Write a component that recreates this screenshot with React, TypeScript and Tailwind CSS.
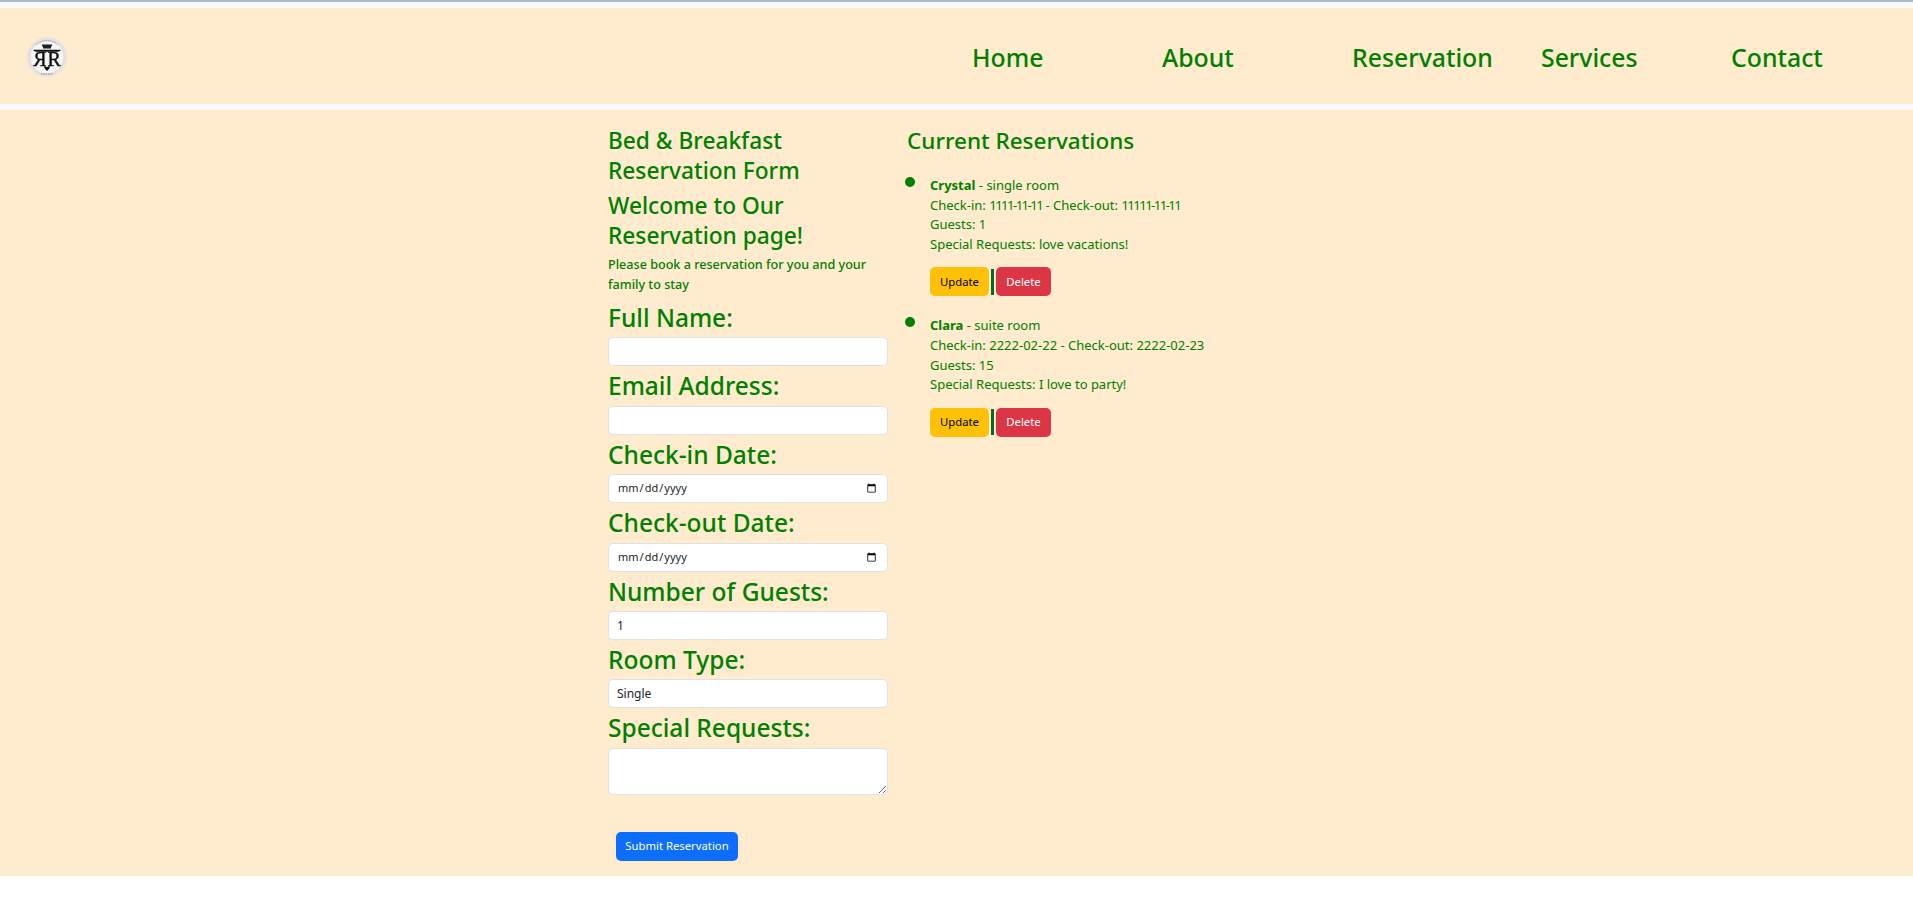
import React from "react";

function Logo() {
  return (
    <svg width="40" height="40" viewBox="0 0 40 40" className="block mt-[2px]">
      <g style={{ filter: "blur(0.45px)" }}>
        <circle cx="20" cy="20" r="20" fill="#e6e3e1" />
        <circle cx="20" cy="20" r="17" fill="#f5f5f5" stroke="#d9d5d1" strokeWidth="0.8" />
        <path d="M15 7.5h10v1.6l-1 .7v1.7h-8v-1.7l-1-.7z" fill="#222" />
        <path d="M6.5 12.8h27v1l-2.5 .9H9l-2.5-.9z" fill="#111" />
        <text x="20.6" y="28.5" fontSize="20" fontFamily='"Liberation Serif", serif' fill="#111" stroke="#111" strokeWidth="0.4">R</text>
        <text x="-19.4" y="28.5" fontSize="20" fontFamily='"Liberation Serif", serif' fill="#111" stroke="#111" strokeWidth="0.4" transform="scale(-1 1)">R</text>
        <path d="M17 29l3 1 3-1-.6 2.4-2.4 2.7-2.4-2.7z" fill="#111" />
        <path d="M9.5 7.5a16.5 16.5 0 0 1 21 0" fill="none" stroke="#777" strokeWidth="1" strokeDasharray="1 1" />
        <path d="M14 37h12" stroke="#888" strokeWidth="1" strokeDasharray="1.5 .8" />
      </g>
    </svg>
  );
}

function Field({ label, children }: { label: string; children: React.ReactNode }) {
  return (
    <div>
      <label className="block text-[24.5px] leading-[39.4px] font-medium">{label}</label>
      {children}
    </div>
  );
}

const inputCls =
  "block w-full h-[29px] bg-white border border-[#dee2e6] rounded-[5px] px-[8px] text-[12px] text-[#212529] outline-none";
const dateCls =
  "block w-full h-[29px] bg-white border border-[#dee2e6] rounded-[5px] px-[8px] text-[11px] text-[#212529] outline-none";

function Reservation({ name, room, dates, guests, req }: { name: string; room: string; dates: React.ReactNode; guests: string; req: string }) {
  return (
    <li className="relative pl-[23px] pb-[20px] text-[13px] leading-[19.6px]">
      <span className="absolute -left-[2px] top-[1px] w-[10px] h-[10px] rounded-full bg-[#008000]" />
      <div>
        <strong className="font-bold">{name}</strong> - {room}
      </div>
      <div>{dates}</div>
      <div>{guests}</div>
      <div>{req}</div>
      <div className="flex items-center mt-[13px]">
        <button className="w-[59px] h-[29px] rounded-[5px] bg-[#ffc107] text-black text-[11.3px]">Update</button>
        <span className="w-[3px] h-[26px] ml-[2px] mr-[2px] bg-[#006b2b]" />
        <button className="w-[55px] h-[29px] rounded-[5px] bg-[#dc3545] text-white text-[11.3px]">Delete</button>
      </div>
    </li>
  );
}

export default function App() {
  return (
    <div className="min-h-[911px] bg-white text-[#008000]" style={{ fontFamily: '"Noto Sans", "Open Sans", sans-serif' }}>
      <div className="h-[2px] bg-[#a9bccb]" />
      <div className="h-[6px] bg-[#f8f9fc]" />
      <header className="h-[96px] bg-[#ffebcd] flex items-center pl-[27px]">
        <Logo />
        <nav className="ml-[905px] flex text-[24.8px] font-medium leading-[30px] mt-[1px]">
          <a className="w-[190px]">Home</a>
          <a className="w-[190px]">About</a>
          <a className="w-[189px]">Reservation</a>
          <a className="w-[190px]">Services</a>
          <a>Contact</a>
        </nav>
      </header>
      <div className="h-[6px] bg-[#f8f9fc]" />
      <main className="h-[766px] bg-[#ffebcd] pl-[608px] pt-[16px] flex gap-[19px]">
        <section className="w-[280px]">
          <h2 className="text-[22.7px] leading-[30px] font-medium">Bed &amp; Breakfast Reservation Form</h2>
          <h2 className="text-[22.7px] leading-[30px] font-medium mt-[5px]">Welcome to Our Reservation page!</h2>
          <p className="text-[12.6px] leading-[20px] font-medium mt-[4px] mb-[3px]">Please book a reservation for you and your family to stay</p>
          <Field label="Full Name:">
            <input type="text" className={inputCls} />
          </Field>
          <Field label="Email Address:">
            <input type="email" className={inputCls} />
          </Field>
          <Field label="Check-in Date:">
            <input type="date" className={dateCls} />
          </Field>
          <Field label="Check-out Date:">
            <input type="date" className={dateCls} />
          </Field>
          <Field label="Number of Guests:">
            <input type="number" defaultValue={1} className={inputCls} />
          </Field>
          <Field label="Room Type:">
            <select className={inputCls + " appearance-none"} defaultValue="Single">
              <option>Single</option>
              <option>Double</option>
              <option>Suite</option>
            </select>
          </Field>
          <Field label="Special Requests:">
            <textarea className="block w-full h-[47px] bg-white border border-[#dee2e6] rounded-[5px] px-[8px] py-[4px] text-[12px] text-[#212529] outline-none resize-y" />
          </Field>
          <button className="block ml-[8px] mt-[37px] w-[122px] h-[29px] rounded-[5px] bg-[#0d6efd] text-white text-[11.3px]">Submit Reservation</button>
        </section>
        <section className="w-[400px]">
          <h2 className="text-[22.5px] leading-[30px] font-medium mb-[20px]">Current Reservations</h2>
          <ul>
            <Reservation
              name="Crystal"
              room="single room"
              dates={
                <>
                  Check-in: <span className="tracking-[-1.5px]">1111-11-11</span> - Check-out: <span className="tracking-[-1.5px]">11111-11-11</span>
                </>
              }
              guests="Guests: 1"
              req="Special Requests: love vacations!"
            />
            <Reservation name="Clara" room="suite room" dates="Check-in: 2222-02-22 - Check-out: 2222-02-23" guests="Guests: 15" req="Special Requests: I love to party!" />
          </ul>
        </section>
      </main>
    </div>
  );
}
